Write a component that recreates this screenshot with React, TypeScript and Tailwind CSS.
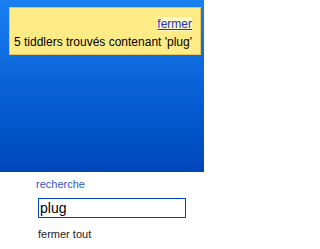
import React from "react";

const App = () => {
  return (
    <div className="w-[204px] h-[249px] bg-white overflow-hidden font-['Liberation_Sans',Arial,sans-serif]">
      {/* Header */}
      <div className="h-[172px] pt-[7px] pl-[9px] pr-[3px] bg-gradient-to-b from-[#1a80f2] to-[#0045bb]">
        <div className="h-[48px] border border-[#e8c45a] bg-[#ffeb85] pr-[8px] pt-[9px] text-right text-[12px] leading-[15px] text-black">
          <a href="#" className="bg-[#fff8c8] text-[#2233bb] underline">
            fermer
          </a>
          <div className="mt-[3px] whitespace-nowrap">5 tiddlers trouvés contenant 'plug'</div>
        </div>
      </div>

      {/* Sidebar */}
      <div className="pl-[36px] pt-[6px]">
        <div className="text-[11px] leading-[13px] text-[#3358c4]">recherche</div>
        <input
          readOnly
          value="plug"
          className="mt-[7px] ml-[2px] w-[148px] h-[20px] border border-[#0044bb] px-[1px] text-[14px] leading-[18px] text-black outline-none"
        />
        <div className="mt-[8px] ml-[2px] text-[11px] leading-[13px] text-[#222]">fermer tout</div>
      </div>
    </div>
  );
};

export default App;
